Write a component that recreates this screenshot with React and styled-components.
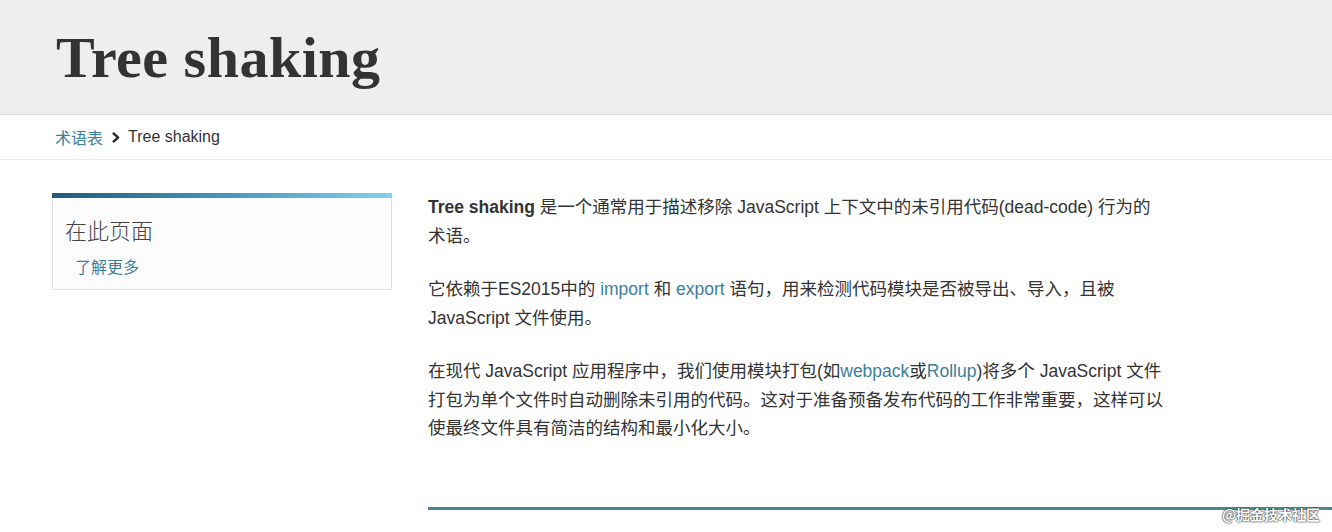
import React from "react";
import styled, { createGlobalStyle } from "styled-components";

const GlobalStyle = createGlobalStyle`
  html, body {
    margin: 0;
    padding: 0;
    background: #fff;
  }
  body {
    width: 1332px;
    height: 532px;
    overflow: hidden;
    color: #333;
    font-family: "Liberation Sans", "Noto Sans CJK SC", sans-serif;
  }
`;

const text = {
  dark: "#333",
  link: "#3d7e9a",
};

const StyledPage = styled.div`
  position: relative;
  display: flex;
  flex-direction: column;
  height: 532px;
`;

const StyledTitleBar = styled.header`
  background: #eee;
  height: 115px;
  box-sizing: border-box;
  border-bottom: 1px solid #dcdcdc;
  padding: 29px 0 0 56px;
`;

const StyledTitle = styled.h1`
  margin: 0;
  font-family: "Liberation Serif", "DejaVu Serif", serif;
  font-weight: bold;
  font-size: 58px;
  letter-spacing: 0.5px;
  color: ${text.dark};
  line-height: 1;
`;

const StyledCrumbs = styled.nav`
  height: 44px;
  border-bottom: 1px solid #ececec;
  display: flex;
  align-items: center;
  padding-left: 55px;
  font-size: 16px;
  gap: 7px;
`;

const StyledCrumbLink = styled.a`
  color: ${text.link};
  text-decoration: none;
`;

const StyledChevron = styled.svg`
  width: 11px;
  height: 13px;
`;

const StyledBody = styled.div`
  display: flex;
  flex-direction: row;
  padding: 33px 0 0 52px;
  gap: 36px;
  flex: 1;
`;

const StyledSidebar = styled.aside`
  width: 338px;
  align-self: flex-start;
  background: #fcfcfc;
  border: 1px solid #e0e0e0;
  border-top: none;
`;

const StyledGradient = styled.div`
  height: 5px;
  margin: 0 -1px;
  background: linear-gradient(to right, #1f5c7a, #4a9cc0 55%, #83d0f2);
`;

const StyledSideHeader = styled.h2`
  margin: 0;
  padding: 16px 12px 0;
  font-family: "Noto Sans CJK SC", serif;
  font-weight: 300;
  font-size: 22px;
  line-height: 30px;
  color: #444;
`;

const StyledSideLink = styled.a`
  display: block;
  padding: 13px 22px 10px;
  font-size: 16px;
  line-height: 22px;
  color: ${text.link};
  text-decoration: none;
`;

const StyledArticle = styled.article`
  width: 742px;
  display: flex;
  flex-direction: column;
`;

const StyledText = styled.p`
  margin: 0 0 25px;
  font-size: 17.5px;
  line-height: 28.5px;
  color: ${text.dark};
`;

const StyledKeep = styled.span`
  white-space: nowrap;
`;

const StyledLink = styled.a`
  color: ${text.link};
  text-decoration: none;
`;

const StyledRule = styled.div`
  margin-top: 39px;
  width: 904px;
  height: 3px;
  background: #4a8a8f;
`;

const StyledWatermark = styled.span`
  position: absolute;
  right: 12px;
  bottom: 8px;
  font-size: 14px;
  font-weight: bold;
  color: #fff;
  text-shadow: 0 0 2px #222, 0 0 1px #222;
  font-family: "Noto Sans CJK SC", sans-serif;
`;

function App() {
  return (
    <StyledPage>
      <GlobalStyle />
      <StyledTitleBar>
        <StyledTitle>Tree shaking</StyledTitle>
      </StyledTitleBar>
      <StyledCrumbs>
        <StyledCrumbLink href="#">术语表</StyledCrumbLink>
        <StyledChevron viewBox="0 0 11 13">
          <path d="M3 1.8 L8 6.5 L3 11.2" fill="none" stroke="#222" strokeWidth="2.4" />
        </StyledChevron>
        <span>Tree shaking</span>
      </StyledCrumbs>
      <StyledBody>
        <StyledSidebar>
          <StyledGradient />
          <StyledSideHeader>在此页面</StyledSideHeader>
          <StyledSideLink href="#">了解更多</StyledSideLink>
        </StyledSidebar>
        <StyledArticle>
          <StyledText>
            <strong>Tree shaking</strong> 是一个通常用于描述移除 JavaScript 上下文中的未引用代码(dead-code) 行为的<StyledKeep>术语。</StyledKeep>
          </StyledText>
          <StyledText>
            它依赖于ES2015中的 <StyledLink href="#">import</StyledLink> 和 <StyledLink href="#">export</StyledLink> 语句，用来检测代码模块是否被导出、导入，且被 JavaScript 文件使用。
          </StyledText>
          <StyledText>
            在现代 JavaScript 应用程序中，我们使用模块打包(如<StyledLink href="#">webpack</StyledLink>或<StyledLink href="#">Rollup</StyledLink>)将多个 JavaScript 文件打包为单个文件时自动删除未引用的代码。这对于准备预备发布代码的工作非常重要，这样可以使最终文件具有简洁的结构和最小化大小。
          </StyledText>
          <StyledRule />
        </StyledArticle>
      </StyledBody>
      <StyledWatermark>@掘金技术社区</StyledWatermark>
    </StyledPage>
  );
}

export default App;
